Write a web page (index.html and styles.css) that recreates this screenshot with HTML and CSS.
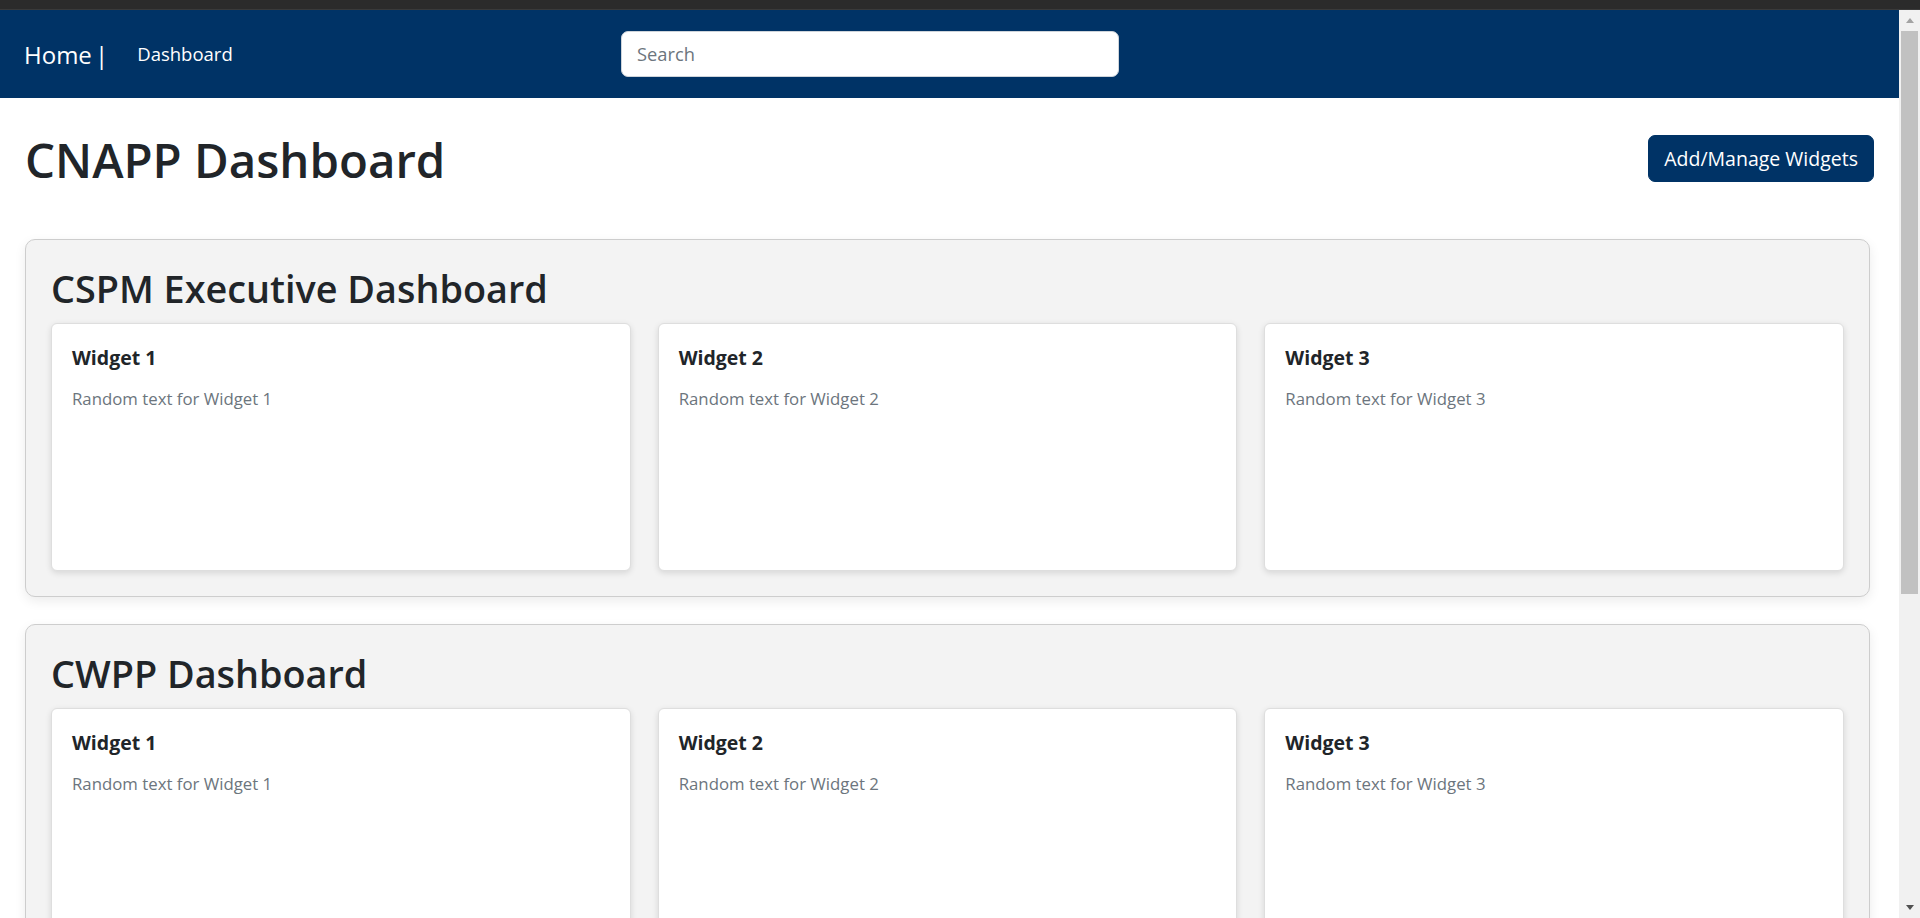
FILE: index.html
```html
<!DOCTYPE html>
<html lang="en">
<head>
<meta charset="utf-8">
<title>CNAPP Dashboard</title>
<link rel="stylesheet" href="styles.css">
</head>
<body>
<div class="topbar"></div>
<div class="window">
  <div class="page">
    <nav class="navbar">
      <div class="nav-left">
        <a class="brand" href="#">Home |</a>
        <a class="nav-link" href="#">Dashboard</a>
      </div>
      <input class="search" type="text" placeholder="Search">
    </nav>
    <main class="container">
      <div class="header-row">
        <h1 class="page-title">CNAPP Dashboard</h1>
        <button class="btn-primary" type="button">Add/Manage Widgets</button>
      </div>
      <section class="panel">
        <h2 class="panel-title">CSPM Executive Dashboard</h2>
        <div class="widgets">
          <div class="widget"><h5 class="widget-title">Widget 1</h5><p class="widget-text">Random text for Widget 1</p></div>
          <div class="widget"><h5 class="widget-title">Widget 2</h5><p class="widget-text">Random text for Widget 2</p></div>
          <div class="widget"><h5 class="widget-title">Widget 3</h5><p class="widget-text">Random text for Widget 3</p></div>
        </div>
      </section>
      <section class="panel">
        <h2 class="panel-title">CWPP Dashboard</h2>
        <div class="widgets">
          <div class="widget"><h5 class="widget-title">Widget 1</h5><p class="widget-text">Random text for Widget 1</p></div>
          <div class="widget"><h5 class="widget-title">Widget 2</h5><p class="widget-text">Random text for Widget 2</p></div>
          <div class="widget"><h5 class="widget-title">Widget 3</h5><p class="widget-text">Random text for Widget 3</p></div>
        </div>
      </section>
    </main>
  </div>
  <div class="scrollbar">
    <div class="sb-btn"><span class="arrow-up"></span></div>
    <div class="sb-track"><div class="sb-thumb"></div></div>
    <div class="sb-btn sb-btn-down"><span class="arrow-down"></span></div>
  </div>
</div>
</body>
</html>
```

FILE: styles.css
```css
* { box-sizing: border-box; }

html, body {
  margin: 0;
  padding: 0;
  height: 918px;
  overflow: hidden;
}

body {
  display: flex;
  flex-direction: column;
  font-family: "Open Sans", "Noto Sans", sans-serif;
  color: #212529;
  background: #ffffff;
}

.topbar {
  height: 10px;
  flex-shrink: 0;
  background: #2b2b2b;
  border-bottom: 1px solid #3a3a3a;
}

.window {
  flex: 1;
  display: flex;
  min-height: 0;
}

.page {
  flex: 1;
  min-width: 0;
  overflow: hidden;
  background: #ffffff;
}

/* Navbar */
.navbar {
  height: 88px;
  background: #003366;
  display: flex;
  align-items: center;
  padding-left: 24px;
}

.nav-left {
  width: 597px;
  flex-shrink: 0;
  display: flex;
  align-items: center;
}

.brand {
  color: #ffffff;
  text-decoration: none;
  font-size: 24px;
  line-height: 24px;
  padding-top: 2px;
  white-space: pre;
  word-spacing: -3px;
}

.nav-link {
  color: #ffffff;
  text-decoration: none;
  font-size: 18.5px;
  line-height: 24px;
  margin-left: 29px;
}

.search {
  width: 498px;
  height: 46px;
  border: 1px solid #ced4da;
  border-radius: 7px;
  padding: 0 15px;
  font-family: "Open Sans", "Noto Sans", sans-serif;
  font-size: 18.3px;
  color: #212529;
  background: #ffffff;
  outline: none;
  margin-bottom: 1px;
}

.search::placeholder {
  color: #6c757d;
}

/* Main */
.container {
  padding: 0 25px;
}

.header-row {
  display: flex;
  align-items: center;
  justify-content: space-between;
  padding-top: 33px;
  margin-bottom: 50px;
}

.page-title {
  margin: 0;
  font-size: 47.4px;
  line-height: 58px;
  font-weight: 600;
  color: #212529;
}

.btn-primary {
  background: #003366;
  color: #ffffff;
  border: 1px solid #003366;
  border-radius: 7px;
  padding: 7.5px 15px;
  font-family: "Open Sans", "Noto Sans", sans-serif;
  font-size: 19.5px;
  line-height: 30px;
  margin-bottom: 3px;
}

.panel {
  background: #f3f3f3;
  border: 1px solid #cdcdcd;
  border-radius: 10px;
  padding: 26px 25px 25px 25px;
  margin-right: 4px;
  margin-bottom: 27px;
  box-shadow: 0 4px 12px rgba(0, 0, 0, 0.08);
}

.panel-title {
  margin: 0 0 10.5px 0;
  font-size: 37.8px;
  line-height: 46.5px;
  font-weight: 600;
  color: #212529;
}

.widgets {
  display: grid;
  grid-template-columns: repeat(3, 1fr);
  gap: 27px;
}

.widget {
  height: 248px;
  background: #ffffff;
  border: 1px solid #dedede;
  border-radius: 6px;
  padding: 20px;
  box-shadow: 0 2px 6px rgba(0, 0, 0, 0.12);
}

.widget-title {
  margin: 0 0 14px 0;
  font-size: 19.5px;
  line-height: 28px;
  font-weight: 700;
  color: #212529;
}

.widget-text {
  margin: 0;
  font-size: 16.8px;
  line-height: 25px;
  color: #6c757d;
}

/* Scrollbar */
.scrollbar {
  width: 21px;
  flex-shrink: 0;
  background: #f1f1f1;
  display: flex;
  flex-direction: column;
}

.sb-btn {
  height: 21px;
  display: flex;
  align-items: center;
  justify-content: center;
  flex-shrink: 0;
}

.sb-btn-down {
  height: 21px;
}

.sb-track {
  flex: 1;
  padding: 0 2px;
}

.sb-thumb {
  height: 563px;
  background: #c1c1c1;
}

.arrow-up {
  width: 0;
  height: 0;
  border-left: 4.5px solid transparent;
  border-right: 4.5px solid transparent;
  border-bottom: 5px solid #a3a3a3;
}

.arrow-down {
  width: 0;
  height: 0;
  border-left: 4.5px solid transparent;
  border-right: 4.5px solid transparent;
  border-top: 5px solid #505050;
}
```
